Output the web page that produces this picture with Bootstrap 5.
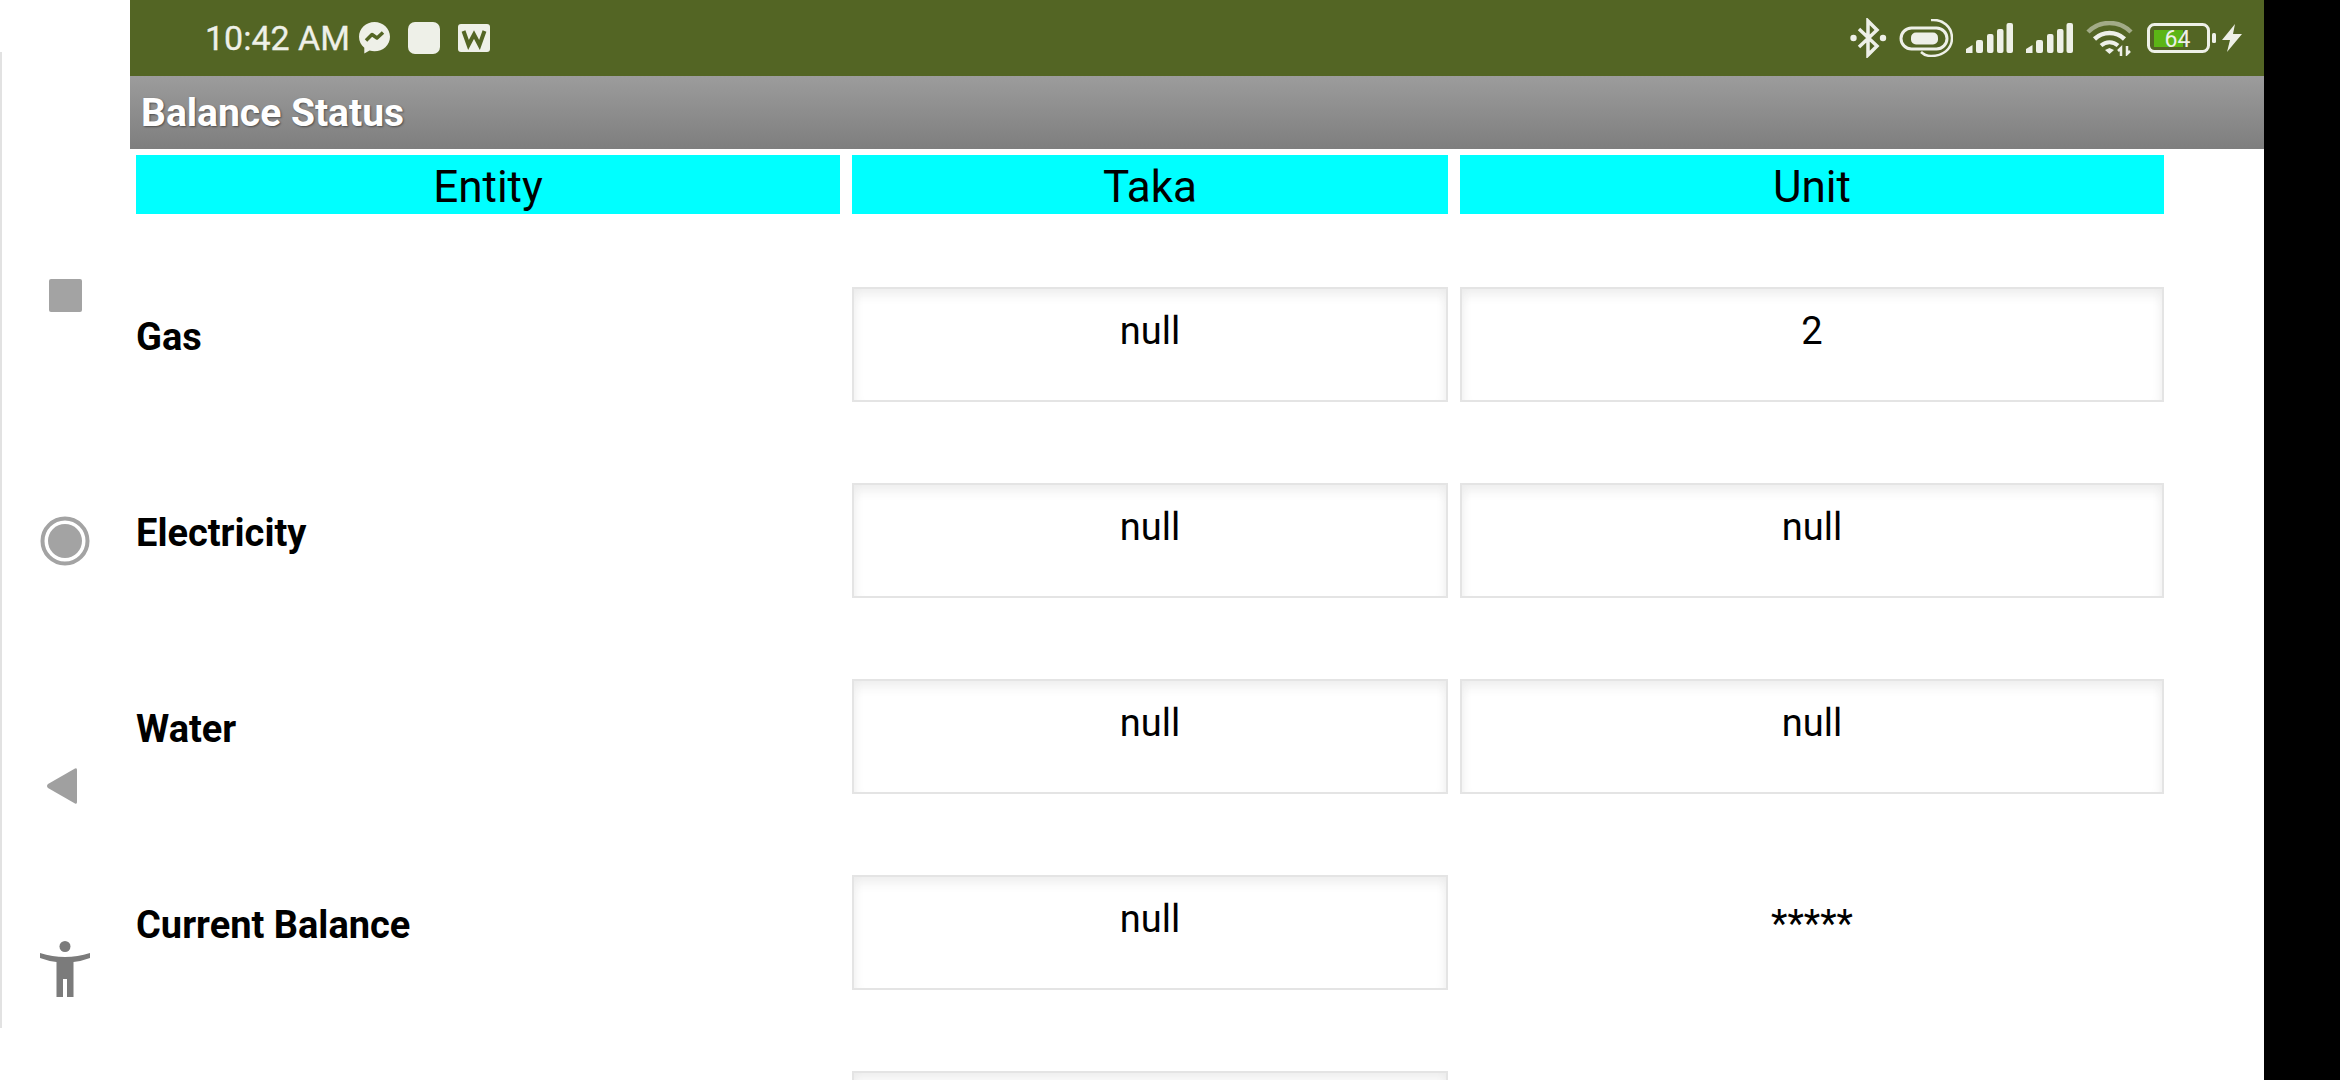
<!DOCTYPE html>
<html lang="en">
<head>
    <meta charset="UTF-8">
    <meta name="viewport" content="width=device-width, initial-scale=1.0">
    <title>Balance Status</title>
    <link href="https://cdn.jsdelivr.net/npm/bootstrap@5.3.0/dist/css/bootstrap.min.css" rel="stylesheet">
    <style>
        html, body { height: 1080px; overflow: hidden; background: #000; }
        body { font-family: Roboto, "Liberation Sans", sans-serif; color: #000; }
        .phone-shell { height: 1080px; width: 2264px; background: #fff; overflow: hidden; }
        .side-nav { width: 130px; flex: none; padding-top: 52px; }
        .side-rail { height: 976px; border-left: 2px solid #e2e2e2; padding-top: 227px; }
        .nav-icon { display: block; }
        .icon-stop { margin-left: 47px; }
        .icon-home { margin: 204px 0 0 38px; }
        .icon-back { margin: 201px 0 0 44px; }
        .icon-access { margin: 136px 0 0 38px; }
        .main-pane { height: 1080px; overflow: hidden; }
        .status-strip { height: 76px; background: #536524; color: #eef0e8; padding-left: 75px; padding-right: 22px; }
        .status-time { font-size: 34px; line-height: 1; margin-right: -9px; -webkit-text-stroke: .3px #eef0e8; }
        .status-left { gap: 18px; }
        .status-right { gap: 12px; }
        .wifi-icon { margin-left: 1px; }
        .battery-icon { margin-left: 2px; }
        .bolt-icon { margin-left: -6px; }
        .title-strip { height: 73px; background: linear-gradient(#9c9c9c, #7e7e7e); padding-left: 11px; color: #fff; font-size: 39px; font-weight: 700; line-height: 75px; text-shadow: 1px 1px 2px rgba(0,0,0,.45); }
        .balance-grid { padding: 6px 0 0 6px; display: grid; grid-template-columns: 704px 596px 704px; column-gap: 12px; }
        .head-cell { height: 59px; background: #0ff; text-align: center; font-size: 44px; line-height: 64px; margin-bottom: 73px; }
        .row-label { font-size: 38px; font-weight: 700; line-height: 44px; padding-top: 28px; height: 115px; margin-bottom: 81px; }
        .value-box { height: 115px; margin-bottom: 81px; background: #fff; border: 2px solid #e4e4e4; box-shadow: inset 0 12px 14px -8px #e9e9e9, inset 10px 0 12px -10px #ececec, inset -10px 0 12px -10px #ececec; text-align: center; font-size: 38px; line-height: 44px; padding-top: 20px; }
        .value-plain { height: 115px; margin-bottom: 81px; text-align: center; font-size: 38px; line-height: 44px; padding-top: 27px; }
    </style>
</head>
<body>
    <div class="phone-shell d-flex">
        <!-- Navigation keys on the left -->
        <div class="side-nav">
            <div class="side-rail">
                <svg class="nav-icon icon-stop" width="33" height="33" viewBox="0 0 33 33"><rect width="33" height="33" rx="2" fill="#a3a3a3"/></svg>
                <svg class="nav-icon icon-home" width="50" height="50" viewBox="0 0 50 50"><circle cx="25" cy="25" r="22.500" fill="none" stroke="#a3a3a3" stroke-width="4"/><circle cx="25" cy="25" r="17" fill="#a3a3a3"/></svg>
                <svg class="nav-icon icon-back" width="32" height="38" viewBox="0 0 32 38"><path d="M29 1.500 Q31 .5 31 3 V35 Q31 37.500 29 36.500 L2 21 Q0 19 2 17 Z" fill="#a0a0a0"/></svg>
                <svg class="nav-icon icon-access" width="50" height="56" viewBox="0 0 50 56"><circle cx="25" cy="5.500" r="5.500" fill="#7b7b7b"/><path d="M0 12 Q25 20 50 12 L50 17 Q42 20 33.500 21 V56 H27 V38 H23 V56 H16.500 V21 Q8 20 0 17 Z" fill="#7b7b7b"/></svg>
            </div>
        </div>

        <div class="main-pane flex-grow-1">
            <!-- Status bar -->
            <div class="status-strip d-flex align-items-center justify-content-between">
                <div class="status-left d-flex align-items-center">
                    <span class="status-time">10:42 AM</span>
                    <svg width="31" height="32" viewBox="0 0 31 32"><path d="M15.500 0 C7 0 0 6.400 0 14.700 C0 19.200 2 23 5.300 25.700 V31.500 L10.600 28.600 C12.200 29.100 13.800 29.300 15.500 29.300 C24 29.300 31 23 31 14.700 C31 6.400 24 0 15.500 0 Z" fill="#eef0e8"/><path d="M7 18.500 L13 12.500 L18 16 L24 10.500" fill="none" stroke="#536524" stroke-width="3.500" stroke-linejoin="round"/></svg>
                    <svg width="32" height="32" viewBox="0 0 32 32"><rect width="32" height="32" rx="7" fill="#eef0e8"/></svg>
                    <svg width="32" height="28" viewBox="0 0 32 28"><rect width="32" height="28" rx="3" fill="#eef0e8"/><path d="M5.500 7 L10.500 21 L16 10.500 L21.500 21 L26.500 7" fill="none" stroke="#536524" stroke-width="4"/></svg>
                </div>
                <div class="status-right d-flex align-items-center">
                    <svg width="37" height="40" viewBox="0 0 37 40"><path d="M9 11 L27 28 L18 37 V3 L27 12 L9 29" fill="none" stroke="#eef0e8" stroke-width="3.500"/><circle cx="3.500" cy="20" r="3.200" fill="#eef0e8"/><circle cx="33" cy="20" r="3.200" fill="#eef0e8"/></svg>
                    <svg width="54" height="38" viewBox="0 0 54 38"><path d="M32 1 C44 0 53 8 53 19 C53 30 44 37 32 37 C28 37 25 36 22 33" fill="none" stroke="#eef0e8" stroke-width="2.500"/><rect x="2" y="9" width="46" height="21" rx="10.500" fill="none" stroke="#eef0e8" stroke-width="3"/><rect x="12" y="13.500" width="27" height="12" rx="5" fill="#eef0e8"/></svg>
                    <svg width="48" height="30" viewBox="0 0 48 30"><path d="M1 26 L7.500 22 V30 H1 Z" fill="#eef0e8"/><rect x="11" y="17" width="7" height="13" rx="2" fill="#eef0e8"/><rect x="22" y="11" width="6.500" height="19" rx="2" fill="#eef0e8"/><rect x="32" y="6" width="6.500" height="24" rx="2" fill="#eef0e8"/><rect x="41.500" y="0" width="6.500" height="30" rx="2" fill="#eef0e8"/></svg>
                    <svg width="48" height="30" viewBox="0 0 48 30"><path d="M1 26 L7.500 22 V30 H1 Z" fill="#eef0e8"/><rect x="11" y="17" width="7" height="13" rx="2" fill="#eef0e8"/><rect x="22" y="11" width="6.500" height="19" rx="2" fill="#eef0e8"/><rect x="32" y="6" width="6.500" height="24" rx="2" fill="#eef0e8"/><rect x="41.500" y="0" width="6.500" height="30" rx="2" fill="#eef0e8"/></svg>
                    <svg class="wifi-icon" width="47" height="35" viewBox="0 0 47 35"><path d="M2 11 C14 -1 33 -1 45 11" fill="none" stroke="#a2ab87" stroke-width="4.500"/><path d="M8.500 18 C17 10 30 10 38.500 18" fill="none" stroke="#eef0e8" stroke-width="4.500"/><path d="M15 24.500 C20 20 27 20 32 24.500" fill="none" stroke="#eef0e8" stroke-width="4"/><path d="M19 29 L23.500 27 L28 29 L23.500 33 Z" fill="#eef0e8"/><path d="M35 35 V27 L32 30 M41 25 V33 L44 30" fill="none" stroke="#eef0e8" stroke-width="2.500"/></svg>
                    <svg class="battery-icon" width="69" height="30" viewBox="0 0 69 30"><rect x="1.500" y="1.500" width="60" height="27" rx="6" fill="none" stroke="#eef0e8" stroke-width="3"/><rect x="7" y="7" width="29" height="17" fill="#5cb516"/><rect x="65" y="10" width="4" height="10" rx="1.500" fill="#eef0e8"/><text x="30.500" y="23.500" text-anchor="middle" font-family="Roboto" font-size="23" fill="#eef0e8">64</text></svg>
                    <svg class="bolt-icon" width="20" height="28" viewBox="0 0 20 28"><path d="M13 0 L0 16 H8 L5 28 L20 10 H11 Z" fill="#eef0e8"/></svg>
                </div>
            </div>

            <div class="title-strip">Balance Status</div>

            <div class="balance-grid">
                <div class="head-cell">Entity</div>
                <div class="head-cell">Taka</div>
                <div class="head-cell">Unit</div>

                <div class="row-label">Gas</div>
                <div class="value-box">null</div>
                <div class="value-box">2</div>

                <div class="row-label">Electricity</div>
                <div class="value-box">null</div>
                <div class="value-box">null</div>

                <div class="row-label">Water</div>
                <div class="value-box">null</div>
                <div class="value-box">null</div>

                <div class="row-label">Current Balance</div>
                <div class="value-box">null</div>
                <div class="value-plain">*****</div>

                <div class="row-label"></div>
                <div class="value-box"></div>
                <div class="value-plain"></div>
            </div>
        </div>
    </div>
    <script src="https://cdn.jsdelivr.net/npm/bootstrap@5.3.0/dist/js/bootstrap.bundle.min.js"></script>
</body>
</html>
